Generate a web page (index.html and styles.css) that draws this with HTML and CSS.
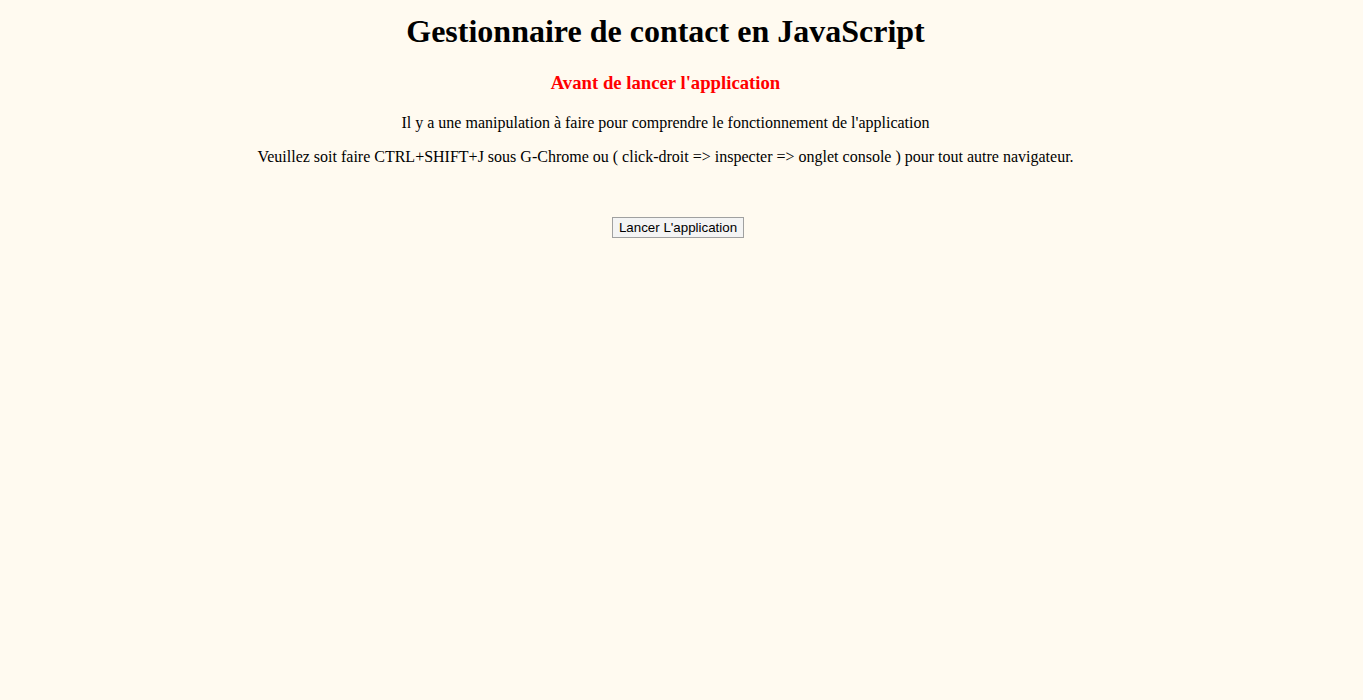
FILE: index.html
```html
<!DOCTYPE html>
<html lang="fr">
<head>
<meta charset="utf-8">
<title>Gestionnaire de contact en JavaScript</title>
<link rel="stylesheet" href="styles.css">
</head>
<body>
<main class="page">
  <h1 class="title">Gestionnaire de contact en JavaScript</h1>
  <h3 class="warning">Avant de lancer l'application</h3>
  <p class="text">Il y a une manipulation à faire pour comprendre le fonctionnement de l'application</p>
  <p class="text">Veuillez soit faire CTRL+SHIFT+J sous G-Chrome ou ( click-droit =&gt; inspecter =&gt; onglet console ) pour tout autre navigateur.</p>
</main>
<div class="actions">
  <button class="launch" type="button">Lancer L'application</button>
</div>
</body>
</html>
```

FILE: styles.css
```css
html, body {
  background: #fffaf0;
}
body {
  margin: 0;
  font-family: "Liberation Serif", "Times New Roman", serif;
  color: #000;
}
.page {
  text-align: center;
  padding-top: 1px;
  padding-right: 32px;
}
.title {
  font-size: 32px;
  font-weight: bold;
  margin: 12px 0 21.5px;
}
.warning {
  font-size: 18.72px;
  font-weight: bold;
  color: #ff0000;
  margin: 18.72px 0 20.72px;
}
.text {
  font-size: 16px;
  margin: 16px 0;
}
.actions {
  text-align: center;
  padding-right: 7px;
  margin-top: 51px;
}
.launch {
  font-family: "Liberation Sans", Arial, sans-serif;
  font-size: 13.333px;
  color: #000;
  background: #f4f4f4;
  border: 1px solid #a0a0a0;
  border-radius: 0;
  padding: 1px 6px;
  height: 21px;
}
```
